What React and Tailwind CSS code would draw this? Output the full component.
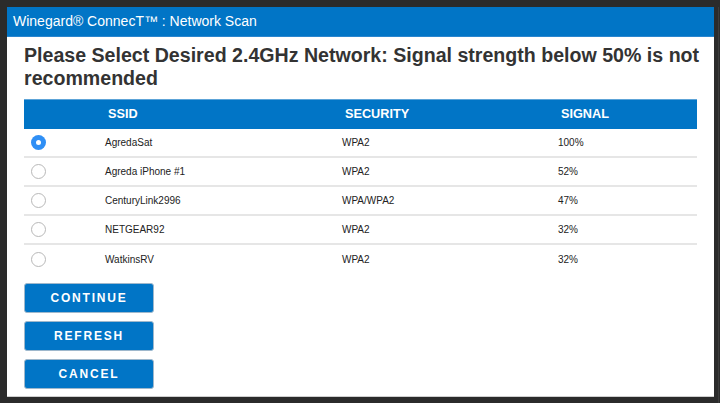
import React from "react";

const rows = [
  ["AgredaSat", "WPA2", "100%", true],
  ["Agreda iPhone #1", "WPA2", "52%", false],
  ["CenturyLink2996", "WPA/WPA2", "47%", false],
  ["NETGEAR92", "WPA2", "32%", false],
  ["WatkinsRV", "WPA2", "32%", false],
];

function Radio({ checked }) {
  if (checked) {
    return (
      <div className="w-[15px] h-[15px] rounded-full bg-[#2f8ff5] flex items-center justify-center">
        <div className="w-[5px] h-[5px] rounded-full bg-white" />
      </div>
    );
  }
  return <div className="w-[15px] h-[15px] rounded-full bg-white border border-[#b8b8b8]" />;
}

export default function App() {
  return (
    <div
      className="w-[720px] h-[403px] bg-[#2b2b2b] pt-[7px] pl-[7px] flex overflow-hidden"
      style={{ fontFamily: '"Liberation Sans", Arial, sans-serif' }}
    >
      <div className="w-[707px] h-[390px] bg-white flex flex-col border-b border-[#cfcfcf] shrink-0">
        <div className="h-[30px] bg-[#0175c6] flex items-center pl-[6px] text-white text-[14px] border-b border-[#2a86cf]">
          Winegard® ConnecT™ : Network Scan
        </div>
        <div className="px-[17px]">
          <h1 className="mt-[7px] w-[685px] text-[19.6px] leading-[23px] font-bold text-[#333333]">
            Please Select Desired 2.4GHz Network: Signal strength below 50% is not recommended
          </h1>
          <div className="mt-[9px] w-[673px]">
            <div className="grid grid-cols-[73px_237px_216px_1fr] h-[30px] items-center bg-[#0175c6] border-t border-[#5da4d8] text-white text-[12.7px] font-bold">
              <div />
              <div className="pl-[11px]">SSID</div>
              <div className="pl-[11px]">SECURITY</div>
              <div className="pl-[11px]">SIGNAL</div>
            </div>
            {rows.map(([ssid, sec, sig, checked], i) => (
              <div
                key={i}
                className={
                  "grid grid-cols-[73px_237px_216px_1fr] h-[29px] items-center text-[10px] text-[#222222] " +
                  (i < rows.length - 1 ? "border-b-2 border-[#e6e6e6]" : "")
                }
              >
                <div className="pl-[7px]">
                  <Radio checked={checked} />
                </div>
                <div className="pl-[8px]">{ssid}</div>
                <div className="pl-[8px]">{sec}</div>
                <div className="pl-[8px]">{sig}</div>
              </div>
            ))}
          </div>
          <div className="mt-[9px] flex flex-col gap-[8px]">
            {["CONTINUE", "REFRESH", "CANCEL"].map((t) => (
              <button
                key={t}
                className="w-[130px] h-[30px] rounded-[3px] bg-[#0175c6] border border-[#9fb8cc] text-white text-[12px] font-bold tracking-[1.8px] flex items-center justify-center"
              >
                {t}
              </button>
            ))}
          </div>
        </div>
      </div>
      <div className="ml-[4px] w-[1px] h-full bg-[#3c3c3c] shrink-0" />
    </div>
  );
}
